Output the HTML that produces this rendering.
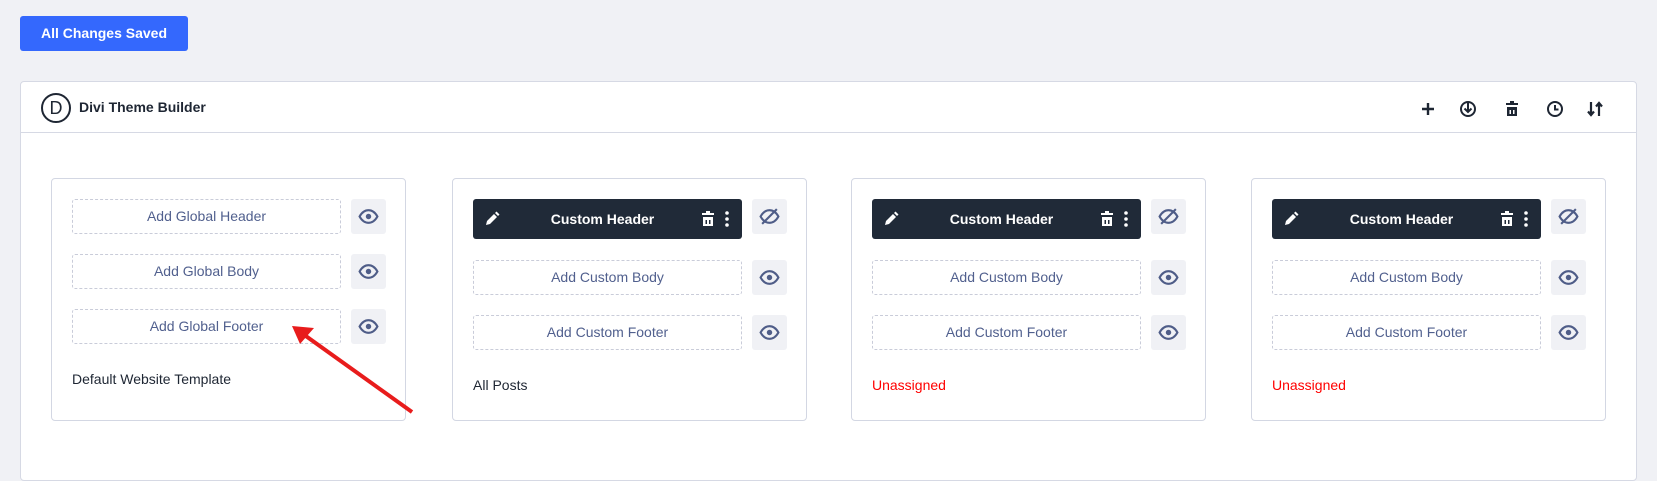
<!DOCTYPE html>
<html><head><meta charset="utf-8"><style>
*{box-sizing:border-box;margin:0;padding:0}
body{width:1657px;height:450px;background:#f0f1f5;font-family:"Liberation Sans",sans-serif;position:relative;overflow:hidden}
.btn{position:absolute;left:20px;top:16px;width:168px;height:35px;background:#3468fd;border-radius:3px;color:#fff;font-weight:bold;font-size:14px;line-height:35px;text-align:center}
.panel{position:absolute;left:20px;top:81px;width:1617px;height:400px;background:#fff;border:1px solid #d6d9e4;border-radius:4px}
.hdr{height:51px;border-bottom:1px solid #d6d9e4;position:relative}
.logo{position:absolute;left:20px;top:11px;width:30px;height:30px;border:2px solid #1e2633;border-radius:50%;text-align:center;line-height:26px;font-size:18px;color:#1e2633}
.title{position:absolute;left:58px;top:17px;font-size:14px;font-weight:bold;color:#1e2633}
.hi{position:absolute;top:18px}
.card{position:absolute;top:178px;width:355px;height:243px;background:#fff;border:1px solid #d3d7e3;border-radius:4px}
.add{position:absolute;left:20px;width:269px;height:35px;border:1px dashed #c9ccd9;border-radius:3px;color:#51608e;font-size:14px;text-align:center;line-height:33px}
.eye{position:absolute;left:299px;width:35px;height:35px;background:#f0f1f5;border-radius:3px}
.eye svg{position:absolute;left:7px;top:7px}
.bar{position:absolute;left:20px;top:20px;width:269px;height:40px;background:#202a38;border-radius:3px;color:#fff;font-weight:bold;font-size:14px;line-height:40px;text-align:center;padding-right:10px}
.lbl{position:absolute;left:20px;font-size:14px;color:#1e2633}
.red{color:#ff0000}
</style></head><body>
<div class="btn">All Changes Saved</div>
<div class="panel">
 <div class="hdr">
  <div class="logo">D</div>
  <div class="title">Divi Theme Builder</div>
  <svg class="hi" style="left:1398px" width="18" height="18" viewBox="0 0 18 18"><path d="M9 3v12M3 9h12" stroke="#1e2633" stroke-width="2.4"/></svg>
  <svg class="hi" style="left:1438px" width="18" height="18" viewBox="0 0 18 18"><circle cx="9" cy="9" r="7" fill="none" stroke="#1e2633" stroke-width="2"/><path d="M9 2v10M5.5 8.5L9 12l3.5-3.5" stroke="#1e2633" stroke-width="2" fill="none"/></svg>
  <svg class="hi" style="left:1482px" width="18" height="18" viewBox="0 0 18 18"><rect x="3" y="3" width="12" height="2" fill="#1e2633"/><rect x="7" y="1" width="4" height="2" fill="#1e2633"/><rect x="4" y="7" width="10" height="9" fill="#1e2633"/><rect x="6.5" y="10" width="1.5" height="4" fill="#fff"/><rect x="10" y="10" width="1.5" height="4" fill="#fff"/></svg>
  <svg class="hi" style="left:1525px" width="18" height="18" viewBox="0 0 18 18"><circle cx="9" cy="9" r="7" fill="none" stroke="#1e2633" stroke-width="2"/><path d="M9 5v4.5h3.5" stroke="#1e2633" stroke-width="2" fill="none"/></svg>
  <svg class="hi" style="left:1565px" width="18" height="18" viewBox="0 0 18 18"><path d="M5 2v13M2 11.5l3 3.5 3-3.5M13 16V3M10 6.5l3-3.5 3 3.5" stroke="#1e2633" stroke-width="2.2" fill="none"/></svg>
 </div>
</div>

<div class="card" style="left:51px">
 <div class="add" style="top:20px">Add Global Header</div><div class="eye" style="top:20px"><svg width="21" height="21" viewBox="0 0 20 20"><path d="M1.5 10C4 5.5 7 4 10 4s6 1.5 8.5 6C16 14.5 13 16 10 16s-6-1.5-8.5-6z" fill="none" stroke="#4f5d88" stroke-width="2"/><circle cx="10" cy="10" r="2.6" fill="#4f5d88"/></svg></div>
 <div class="add" style="top:75px">Add Global Body</div><div class="eye" style="top:75px"><svg width="21" height="21" viewBox="0 0 20 20"><path d="M1.5 10C4 5.5 7 4 10 4s6 1.5 8.5 6C16 14.5 13 16 10 16s-6-1.5-8.5-6z" fill="none" stroke="#4f5d88" stroke-width="2"/><circle cx="10" cy="10" r="2.6" fill="#4f5d88"/></svg></div>
 <div class="add" style="top:130px">Add Global Footer</div><div class="eye" style="top:130px"><svg width="21" height="21" viewBox="0 0 20 20"><path d="M1.5 10C4 5.5 7 4 10 4s6 1.5 8.5 6C16 14.5 13 16 10 16s-6-1.5-8.5-6z" fill="none" stroke="#4f5d88" stroke-width="2"/><circle cx="10" cy="10" r="2.6" fill="#4f5d88"/></svg></div>
 <div class="lbl" style="top:192px">Default Website Template</div>
</div>

<div class="card" style="left:452px">
 <div class="bar"><svg style="position:absolute;left:10px;top:11px" width="18" height="18" viewBox="0 0 18 18"><path d="M3 15l1-4 7-7 3 3-7 7z" fill="#fff"/><path d="M12 3l1.5-1.5 3 3L15 6z" fill="#fff"/></svg>Custom Header<svg style="position:absolute;left:226px;top:11px" width="18" height="18" viewBox="0 0 18 18"><rect x="3" y="3" width="12" height="2" fill="#fff"/><rect x="7" y="1" width="4" height="2" fill="#fff"/><rect x="4" y="7" width="10" height="9" fill="#fff"/><rect x="6.5" y="10" width="1.5" height="4" fill="#202a38"/><rect x="10" y="10" width="1.5" height="4" fill="#202a38"/></svg><svg style="position:absolute;left:251px;top:11px" width="6" height="18" viewBox="0 0 6 18"><circle cx="3" cy="3" r="1.8" fill="#fff"/><circle cx="3" cy="9" r="1.8" fill="#fff"/><circle cx="3" cy="15" r="1.8" fill="#fff"/></svg></div>
 <div class="eye" style="top:20px"><svg width="21" height="21" viewBox="0 0 20 20"><path d="M1.5 10C4 5.5 7 4 10 4s6 1.5 8.5 6C16 14.5 13 16 10 16s-6-1.5-8.5-6z" fill="none" stroke="#4f5d88" stroke-width="2"/><path d="M3 17L17 3" stroke="#4f5d88" stroke-width="2"/></svg></div>
 <div class="add" style="top:81px">Add Custom Body</div><div class="eye" style="top:81px"><svg width="21" height="21" viewBox="0 0 20 20"><path d="M1.5 10C4 5.5 7 4 10 4s6 1.5 8.5 6C16 14.5 13 16 10 16s-6-1.5-8.5-6z" fill="none" stroke="#4f5d88" stroke-width="2"/><circle cx="10" cy="10" r="2.6" fill="#4f5d88"/></svg></div>
 <div class="add" style="top:136px">Add Custom Footer</div><div class="eye" style="top:136px"><svg width="21" height="21" viewBox="0 0 20 20"><path d="M1.5 10C4 5.5 7 4 10 4s6 1.5 8.5 6C16 14.5 13 16 10 16s-6-1.5-8.5-6z" fill="none" stroke="#4f5d88" stroke-width="2"/><circle cx="10" cy="10" r="2.6" fill="#4f5d88"/></svg></div>
 <div class="lbl" style="top:198px">All Posts</div>
</div>

<div class="card" style="left:851px">
 <div class="bar"><svg style="position:absolute;left:10px;top:11px" width="18" height="18" viewBox="0 0 18 18"><path d="M3 15l1-4 7-7 3 3-7 7z" fill="#fff"/><path d="M12 3l1.5-1.5 3 3L15 6z" fill="#fff"/></svg>Custom Header<svg style="position:absolute;left:226px;top:11px" width="18" height="18" viewBox="0 0 18 18"><rect x="3" y="3" width="12" height="2" fill="#fff"/><rect x="7" y="1" width="4" height="2" fill="#fff"/><rect x="4" y="7" width="10" height="9" fill="#fff"/><rect x="6.5" y="10" width="1.5" height="4" fill="#202a38"/><rect x="10" y="10" width="1.5" height="4" fill="#202a38"/></svg><svg style="position:absolute;left:251px;top:11px" width="6" height="18" viewBox="0 0 6 18"><circle cx="3" cy="3" r="1.8" fill="#fff"/><circle cx="3" cy="9" r="1.8" fill="#fff"/><circle cx="3" cy="15" r="1.8" fill="#fff"/></svg></div>
 <div class="eye" style="top:20px"><svg width="21" height="21" viewBox="0 0 20 20"><path d="M1.5 10C4 5.5 7 4 10 4s6 1.5 8.5 6C16 14.5 13 16 10 16s-6-1.5-8.5-6z" fill="none" stroke="#4f5d88" stroke-width="2"/><path d="M3 17L17 3" stroke="#4f5d88" stroke-width="2"/></svg></div>
 <div class="add" style="top:81px">Add Custom Body</div><div class="eye" style="top:81px"><svg width="21" height="21" viewBox="0 0 20 20"><path d="M1.5 10C4 5.5 7 4 10 4s6 1.5 8.5 6C16 14.5 13 16 10 16s-6-1.5-8.5-6z" fill="none" stroke="#4f5d88" stroke-width="2"/><circle cx="10" cy="10" r="2.6" fill="#4f5d88"/></svg></div>
 <div class="add" style="top:136px">Add Custom Footer</div><div class="eye" style="top:136px"><svg width="21" height="21" viewBox="0 0 20 20"><path d="M1.5 10C4 5.5 7 4 10 4s6 1.5 8.5 6C16 14.5 13 16 10 16s-6-1.5-8.5-6z" fill="none" stroke="#4f5d88" stroke-width="2"/><circle cx="10" cy="10" r="2.6" fill="#4f5d88"/></svg></div>
 <div class="lbl red" style="top:198px">Unassigned</div>
</div>

<div class="card" style="left:1251px">
 <div class="bar"><svg style="position:absolute;left:10px;top:11px" width="18" height="18" viewBox="0 0 18 18"><path d="M3 15l1-4 7-7 3 3-7 7z" fill="#fff"/><path d="M12 3l1.5-1.5 3 3L15 6z" fill="#fff"/></svg>Custom Header<svg style="position:absolute;left:226px;top:11px" width="18" height="18" viewBox="0 0 18 18"><rect x="3" y="3" width="12" height="2" fill="#fff"/><rect x="7" y="1" width="4" height="2" fill="#fff"/><rect x="4" y="7" width="10" height="9" fill="#fff"/><rect x="6.5" y="10" width="1.5" height="4" fill="#202a38"/><rect x="10" y="10" width="1.5" height="4" fill="#202a38"/></svg><svg style="position:absolute;left:251px;top:11px" width="6" height="18" viewBox="0 0 6 18"><circle cx="3" cy="3" r="1.8" fill="#fff"/><circle cx="3" cy="9" r="1.8" fill="#fff"/><circle cx="3" cy="15" r="1.8" fill="#fff"/></svg></div>
 <div class="eye" style="top:20px"><svg width="21" height="21" viewBox="0 0 20 20"><path d="M1.5 10C4 5.5 7 4 10 4s6 1.5 8.5 6C16 14.5 13 16 10 16s-6-1.5-8.5-6z" fill="none" stroke="#4f5d88" stroke-width="2"/><path d="M3 17L17 3" stroke="#4f5d88" stroke-width="2"/></svg></div>
 <div class="add" style="top:81px">Add Custom Body</div><div class="eye" style="top:81px"><svg width="21" height="21" viewBox="0 0 20 20"><path d="M1.5 10C4 5.5 7 4 10 4s6 1.5 8.5 6C16 14.5 13 16 10 16s-6-1.5-8.5-6z" fill="none" stroke="#4f5d88" stroke-width="2"/><circle cx="10" cy="10" r="2.6" fill="#4f5d88"/></svg></div>
 <div class="add" style="top:136px">Add Custom Footer</div><div class="eye" style="top:136px"><svg width="21" height="21" viewBox="0 0 20 20"><path d="M1.5 10C4 5.5 7 4 10 4s6 1.5 8.5 6C16 14.5 13 16 10 16s-6-1.5-8.5-6z" fill="none" stroke="#4f5d88" stroke-width="2"/><circle cx="10" cy="10" r="2.6" fill="#4f5d88"/></svg></div>
 <div class="lbl red" style="top:198px">Unassigned</div>
</div>

<svg style="position:absolute;left:0;top:0" width="1657" height="450"><path d="M412 412L303 334" stroke="#e81c1c" stroke-width="4"/><path d="M292 326L314 328L300 344Z" fill="#e81c1c"/></svg>
</body></html>
